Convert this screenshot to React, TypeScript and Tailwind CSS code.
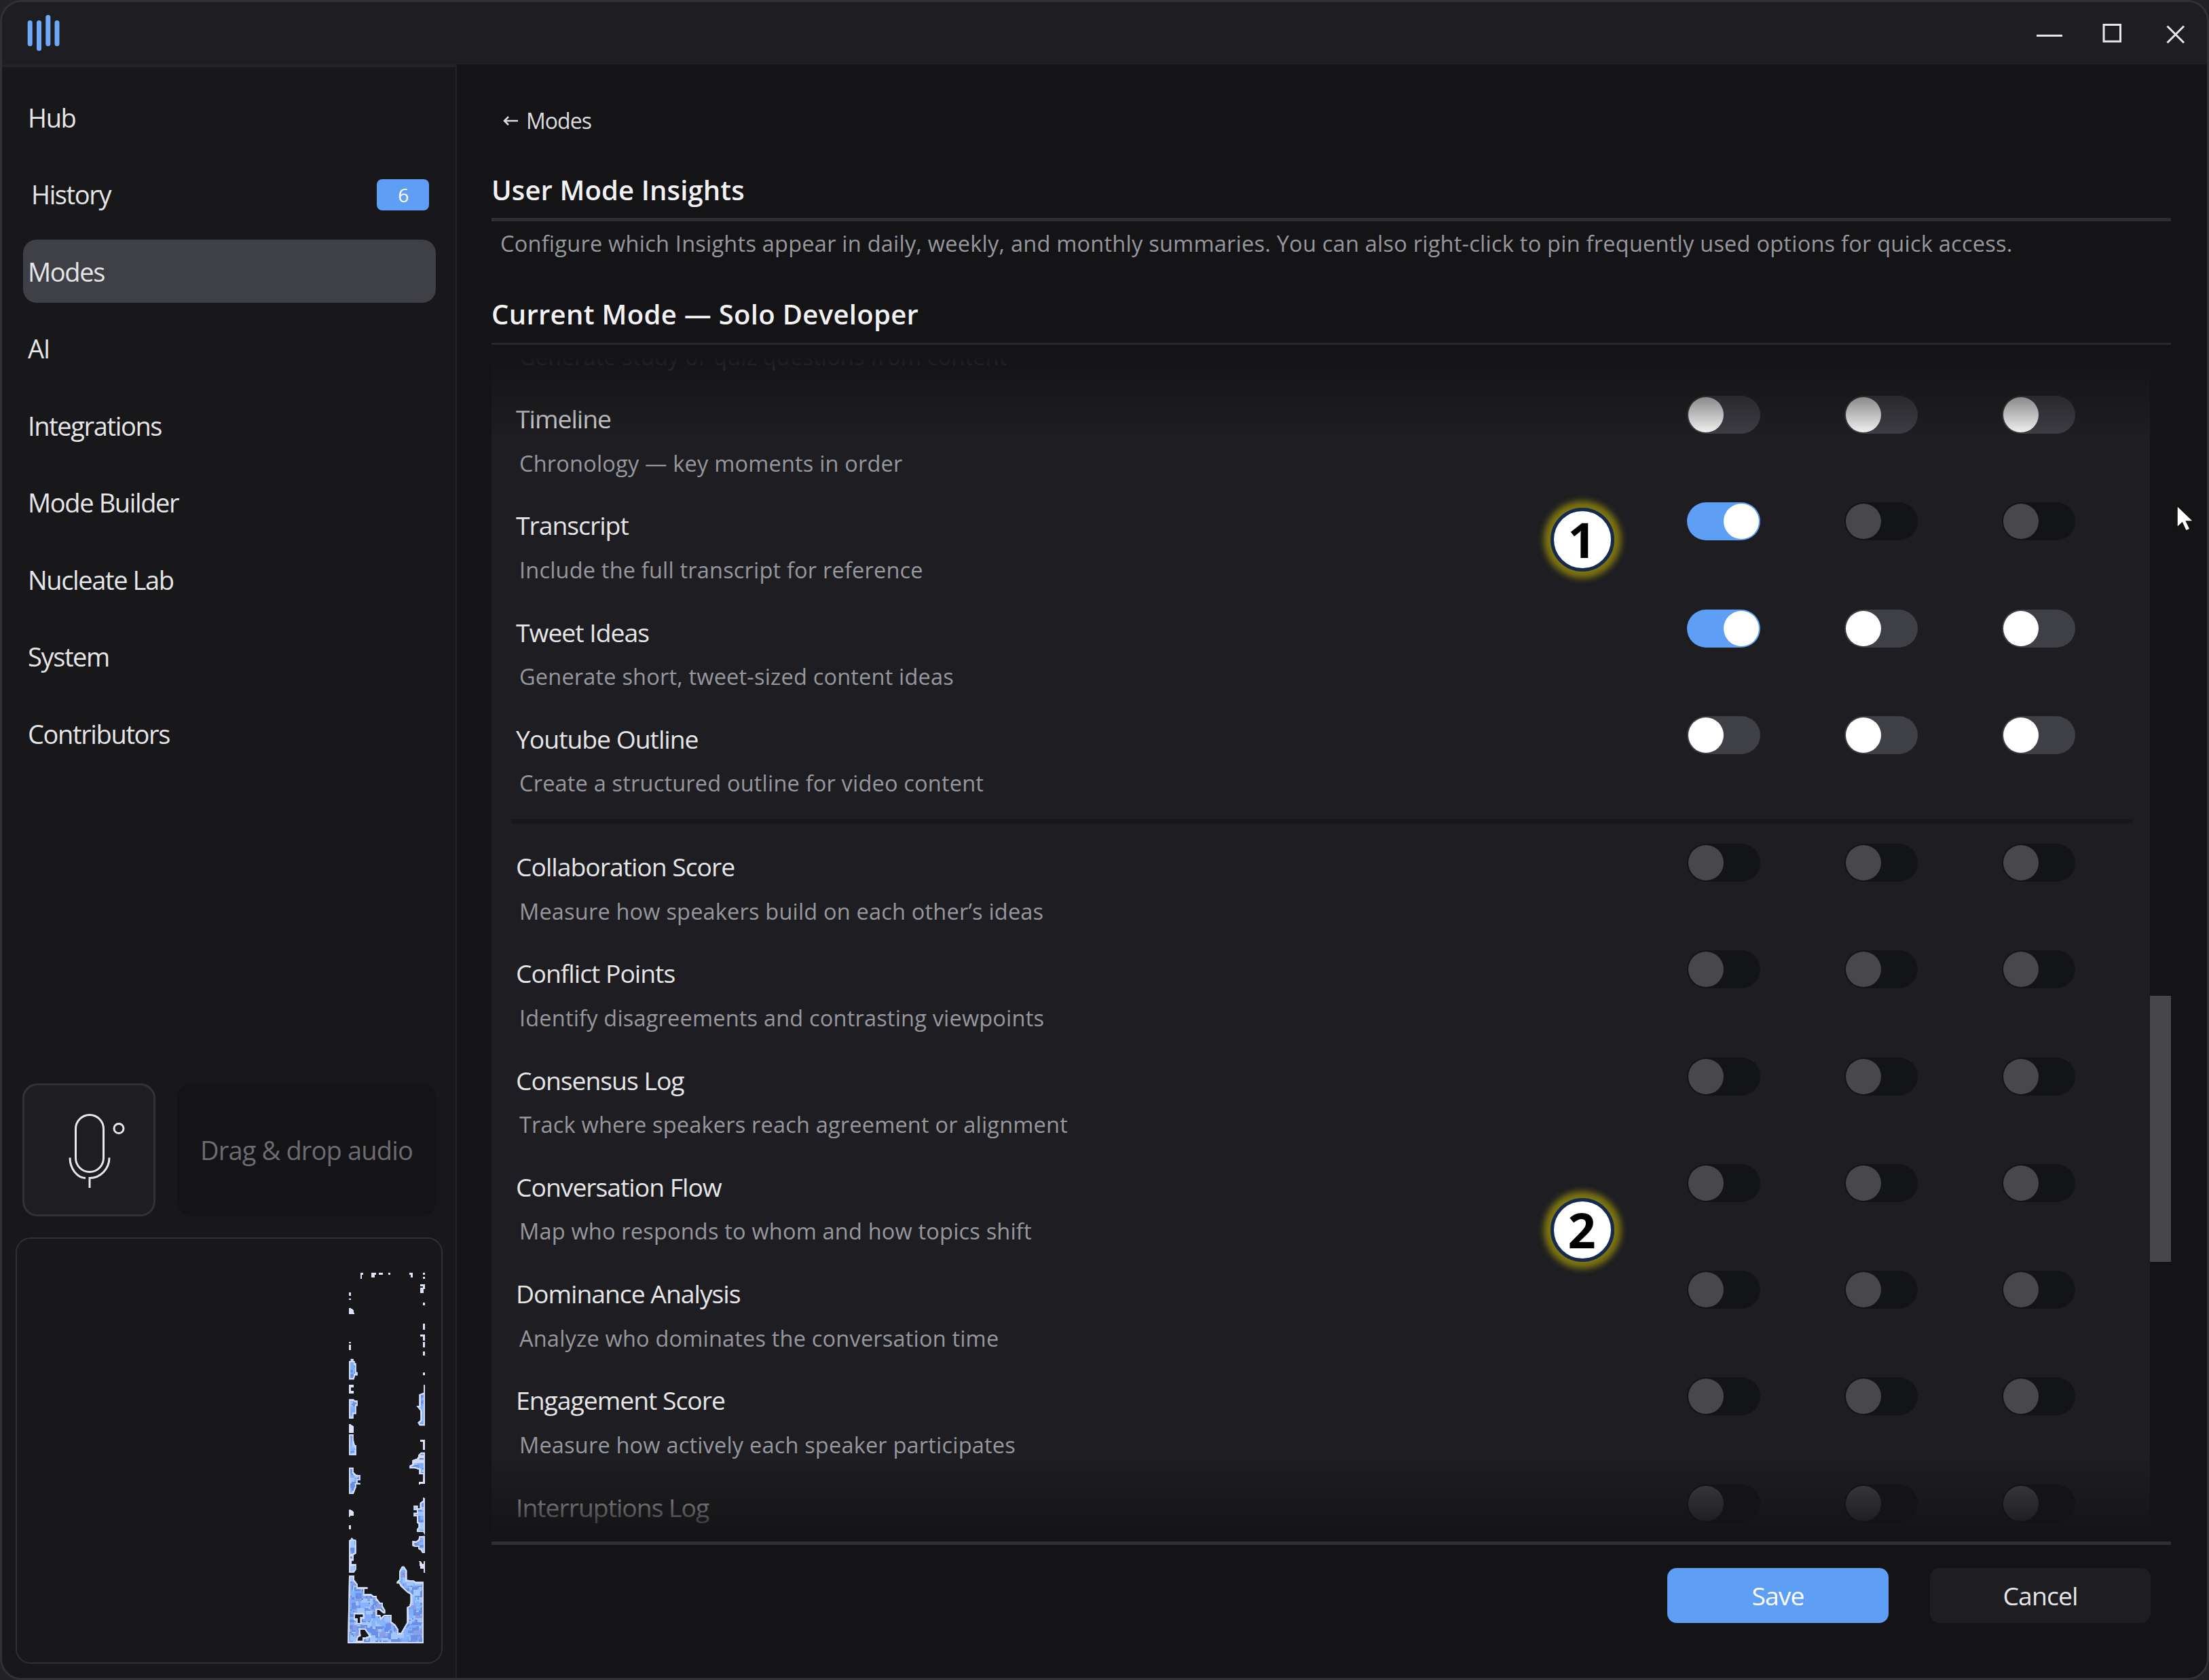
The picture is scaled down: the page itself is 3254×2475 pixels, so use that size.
import React from 'react'
import { clsx } from 'clsx'

type ToggleState = 'on' | 'off' | 'disabled'

type Insight = {
  title: string
  text: string
  toggles: [ToggleState, ToggleState, ToggleState]
}

const OFF: Insight['toggles'] = ['off', 'off', 'off']
const LOCKED: Insight['toggles'] = ['disabled', 'disabled', 'disabled']

const contentInsights: Insight[] = [
  { title: 'Timeline', text: 'Chronology — key moments in order', toggles: OFF },
  { title: 'Transcript', text: 'Include the full transcript for reference', toggles: ['on', 'disabled', 'disabled'] },
  { title: 'Tweet Ideas', text: 'Generate short, tweet-sized content ideas', toggles: ['on', 'off', 'off'] },
  { title: 'Youtube Outline', text: 'Create a structured outline for video content', toggles: OFF }
]

const speakerInsights: Insight[] = [
  { title: 'Collaboration Score', text: 'Measure how speakers build on each other’s ideas', toggles: LOCKED },
  { title: 'Conflict Points', text: 'Identify disagreements and contrasting viewpoints', toggles: LOCKED },
  { title: 'Consensus Log', text: 'Track where speakers reach agreement or alignment', toggles: LOCKED },
  { title: 'Conversation Flow', text: 'Map who responds to whom and how topics shift', toggles: LOCKED },
  { title: 'Dominance Analysis', text: 'Analyze who dominates the conversation time', toggles: LOCKED },
  { title: 'Engagement Score', text: 'Measure how actively each speaker participates', toggles: LOCKED },
  { title: 'Interruptions Log', text: '', toggles: LOCKED }
]

const navItems: { label: string; badge?: number }[] = [
  { label: 'Hub' },
  { label: 'History', badge: 6 },
  { label: 'Modes' },
  { label: 'AI' },
  { label: 'Integrations' },
  { label: 'Mode Builder' },
  { label: 'Nucleate Lab' },
  { label: 'System' },
  { label: 'Contributors' }
]

const TitleBar: React.FC = () => (
  <header className="flex h-[92px] shrink-0 items-start justify-between bg-[#1e1e22]">
    <svg className="mt-[18px] ml-[37px]" width="50" height="56" viewBox="0 0 50 56" fill="#6fa8fb">
      <rect x="0.7" y="9" width="7" height="38" rx="3.5" />
      <rect x="14" y="9" width="7" height="45" rx="3.5" />
      <rect x="27.3" y="1" width="7" height="46" rx="3.5" />
      <rect x="40.5" y="9" width="7" height="38" rx="3.5" />
    </svg>
    <svg className="mt-[30px] mr-[30px]" width="224" height="32" viewBox="0 0 224 32" fill="none" stroke="#e8e8ea" strokeWidth="3">
      <path d="M3 19.5H41" />
      <rect x="102" y="3.5" width="24.5" height="24.5" />
      <path d="M195.5 5.500L220 30M220 5.500L195.500 30" />
    </svg>
  </header>
)

const MicIcon: React.FC = () => (
  <svg width="196" height="196" viewBox="0 0 196 196" fill="none" stroke="#e8e8ea" strokeWidth="3">
    <rect x="78.500" y="46.500" width="41" height="84" rx="20.500" />
    <path d="M70 109.500C70 126 81 139.500 93 139.500M99 154V139.500C115 139.500 128 126 128 109.500" />
    <circle cx="142" cy="66.500" r="7" />
  </svg>
)

// Shapes are on a 3x grid, grouped in four vertical slices of the frame.
const sparks = [
  'M74 28h14v8h-6v18h-8zM123 28h20v8h-6v12h-14zM156 28h18v8h-18zM198 28h8v9h-8zM290 28h16v20h-8v-12h-8zM352 28h8v8h-8zM352 46h8v8h-8zM340 78h20v20h-6v20h-14v-24h12v-8h-12zM352 158h8v14h-8zM352 252h8v26h-8zM340 300h20v26h-8v-18h-12zM352 332h8v26h-8zM352 376h8v18h-8zM24 115h8v14h-8zM24 140h8v8h-8zM24 183h8l12 8v10l6 9h-26zM24 332h8v8h-8zM24 346h8v24h-8z',
  'M352 94h8v12h-8zM24 148h20v10h-10v16h10v13h-20zM24 322h8l12 8v30h-20zM340 390h20v44h-8v-36h-12z',
  'M24 234h8l12 8v18h-12l-4 6h-4zM24 302h8v20h-8zM334 124v-12h18v-12h8v20h-20z',
  'M334 28h8l6 12h6v-12h6v50h-6v-18h-14z'
]

const clumps = [
  { y: 375, d: 'M24 42h8v-10h12v10h6v10h6v40h6v14h-12v6l-4 12h-22zM24 211h20l6 6h12v24h-6v36h-12v20h-20zM24 366h20v24l6 24h6v44h-32zM360 148v180h-24l-8-14 12-10v-42l-18-22h12v-50l20-8v-34zM360 446v40h-48v-8l18-6v-14l12-12z' },
  { y: 840, d: 'M24 48h20v20l12 12 18 2v22h-12v12h12v7h-18v12l-12 30h-20zM360 0v104h-8v-26h-18v-20l-18-6h-24v-12l12-6v-18l20-6 6-10zM360 184v162l-8-14h-28v-12l8-8v-14l-8-6v-28h-14v-16h14v-12h-14v-20h18v12h10v-24l14-10v-14zM360 350v76h-12l-6-12-12-6v-10h-16l-10-4v-22l16 2 12-8 2-14zM24 370l8-4 4-8 8 8 12 2v60l-12 6v26h-20z' },
  { y: 1275, d: 'M24 0h20v20h-8v20h20v24l-10 14h-22zM24 90h24v20l14 18v14h44v8h-14v22h30l10 8h14v10l16 20h12v16l10 16v16h-8l-18-16h-10v22h14l4 12 14-12h32v30l18 14 12 20v16h12l18-32 8-14v-68l12-6 4-20v-30l-14-8-30-28-6-12h-10v-8l10-10v-36l12-22h10l12 18v42l30 2 8 6h36v272h-336zM50 262h36v12h-12v26h-12v-20h-12zM74 330h20l20 28-18 6h-12v14h-22l2-14 12-6z' }
]

// Small deterministic generator so the mottling is stable between renders.
const patches = (() => {
  let seed = 11
  const next = () => {
    seed = (seed * 16807) % 2147483647
    return seed / 2147483647
  }
  const colors = ['#6a8fe8', '#a3c6fb', '#86b3fd', '#8a9ee6', '#6c93ea', '#9cc4fa', '#7189b8', '#78a6f8']
  return Array.from({ length: 2600 }, (_, i) => {
    const small = i % 4 === 0
    const size = small ? 1 : 2 + Math.floor(next() * 4)
    return {
      x: 24 + Math.floor(next() * 55) * 6.2,
      y: 400 + Math.floor(next() * 206) * 6.2,
      w: size * 6.2,
      h: (small ? 1 : 2 + Math.floor(next() * 3)) * 6.2,
      fill: small ? colors[6] : colors[Math.floor(next() * 8) % 6]
    }
  })
})()

const Visualizer: React.FC = () => (
  <svg width="130" height="565" viewBox="0 0 390 1695" shapeRendering="crispEdges">
    <defs>
      <clipPath id="clumps">
        {clumps.map((c) => (
          <path key={c.y} d={c.d} transform={`translate(0 ${c.y})`} clipRule="evenodd" />
        ))}
      </clipPath>
    </defs>
    <g clipPath="url(#clumps)">
      <rect width="390" height="1695" fill="#80adfa" />
      {patches.map((p, i) => (
        <rect key={i} x={p.x} y={p.y} width={p.w} height={p.h} fill={p.fill} />
      ))}
      {clumps.map((c) => (
        <path key={c.y} d={c.d} transform={`translate(0 ${c.y})`} fill="none" stroke="#d5dcf6" strokeWidth="13" />
      ))}
    </g>
    {[0, 375, 840, 1275].map((y, i) => (
      <path key={y} d={sparks[i]} transform={`translate(0 ${y})`} fill="#dde2fa" />
    ))}
  </svg>
)

const Sidebar: React.FC = () => (
  <aside className="flex w-[670px] shrink-0 flex-col border-t-4 border-r-2 border-[#232326] bg-[#18181a]">
    <nav className="mt-[27px] flex flex-col gap-[20.5px] pr-[29px] pl-[31px]">
      {navItems.map((item) => (
        <div
          key={item.label}
          className={clsx(
            'flex h-[93px] items-center justify-between rounded-[20px] pt-px pr-[10px] text-[38px] tracking-[-0.036em] text-[#e6e6e8]',
            item.badge ? 'pl-[12px]' : 'pl-[7px]',
            item.label === 'Modes' && 'bg-[#3f3f46]'
          )}
        >
          {item.label}
          {item.badge && (
            <span className="flex h-[46px] w-[77px] items-center justify-center rounded-[8px] bg-[#5e9ef5] text-[28px] text-white">
              {item.badge}
            </span>
          )}
        </div>
      ))}
    </nav>
    <div className="mt-auto flex gap-[32px] pl-[30px]">
      <div className="size-[196px] rounded-[22px] bg-[#1e1e22] outline-[3px] -outline-offset-3 outline-[#323236]">
        <MicIcon />
      </div>
      <div className="flex h-[196px] w-[381px] items-center justify-center rounded-[22px] bg-[#141416] text-[38px] tracking-[-0.022em] text-[#6c6c72]">
        Drag &amp; drop audio
      </div>
    </div>
    <div className="mt-[31px] mb-[21px] ml-[20px] flex h-[628px] w-[629px] justify-end rounded-[22px] border-2 border-[#303034] pt-[41px] pr-[14px]">
      <Visualizer />
    </div>
  </aside>
)

const Toggle: React.FC<{ value: ToggleState }> = ({ value }) => (
  <div
    className={clsx(
      'flex h-[56px] w-[108px] items-center rounded-[28px] px-[2px]',
      value === 'on' && 'justify-end bg-[#5e9ef5]',
      value === 'off' && 'bg-[#3f3f46]',
      value === 'disabled' && 'bg-[#131417]'
    )}
  >
    <div className={clsx('size-[52px] rounded-full', value === 'disabled' ? 'bg-[#48474c]' : 'bg-white')} />
  </div>
)

const InsightRow: React.FC<{ insight: Insight }> = ({ insight }) => (
  <div className="flex h-[125.2px] items-start justify-between pr-[110px] pl-[36px]">
    <div className="flex flex-col gap-[17.5px] pt-[10px]">
      <div className="h-[48px] text-[37.300px] leading-[48px] tracking-[-0.027em] text-[#e6e6e8]">{insight.title}</div>
      <div className="h-[48px] pl-[5px] text-[32.500px] leading-[48px] tracking-[0.006em] text-[#97979e]">{insight.text}</div>
    </div>
    <div className="flex gap-[124px]">
      {insight.toggles.map((t, i) => (
        <Toggle key={i} value={t} />
      ))}
    </div>
  </div>
)

const InsightList: React.FC = () => (
  <div className="flex h-[1741px]">
    <div className="relative w-[2443px] overflow-hidden bg-[#1e1e22]">
      <div className="-mt-[25px] h-[48px] pl-[41px] text-[32.500px] leading-[48px] tracking-[0.006em] text-[#97979e]">
        Generate study or quiz questions from content
      </div>
      <div className="mt-[33px] flex flex-col gap-[32.1px]">
        {contentInsights.map((insight) => (
          <InsightRow key={insight.title} insight={insight} />
        ))}
      </div>
      <div className="mt-[27px] mr-[25px] mb-[30px] ml-[29px] h-[6px] bg-[#18181b]" />
      <div className="flex flex-col gap-[32.1px]">
        {speakerInsights.map((insight) => (
          <InsightRow key={insight.title} insight={insight} />
        ))}
      </div>
      {/* edge fades over the scrolled content */}
      <div className="absolute inset-x-0 top-0 h-[118px] bg-linear-to-b from-[#141416]/98 to-[#141416]/0" />
      <div className="absolute inset-x-0 bottom-0 h-[123px] bg-linear-to-t from-[#141416] to-[#141416]/0" />
    </div>
    <div className="w-[31px] pt-[940px]">
      <div className="h-[392px] bg-[#46464b]" />
    </div>
  </div>
)

const Marker: React.FC<{ label: string; className: string }> = ({ label, className }) => (
  <div
    className={clsx(
      'absolute flex size-[94px] items-center justify-center rounded-full border-[5px] border-[#16294f] bg-white pr-[2px] pb-[2px] text-[72px] leading-none font-bold text-black shadow-[0_0_10px_10px_#7d7410]',
      className
    )}
  >
    {label}
  </div>
)

export default function App() {
  return (
    <div className="h-[2475px] w-[3254px] overflow-hidden bg-[#222224] font-['Open_Sans','Noto_Sans',sans-serif]">
      <div className="relative flex h-full flex-col overflow-hidden rounded-[32px] border-[3px] border-[#323236] bg-[#141416]">
        <TitleBar />
        <div className="flex min-h-0 flex-1">
          <Sidebar />
          <main className="flex w-[2525px] flex-col pl-[51px]">
            <div className="mt-[63px] flex h-[40px] items-center pl-[17px] text-[32px] leading-[40px] tracking-[-0.03em] text-[#dcdcdf]">
              <svg className="mr-[11px]" width="23" height="18" viewBox="0 0 23 18" fill="none" stroke="#dcdcdf" strokeWidth="2.500">
                <path d="M22 9H2M8 3L2 9L8 15" />
              </svg>
              Modes
            </div>
            <h1 className="mt-[57px] h-[50px] text-[40px] leading-[50px] font-semibold tracking-[0.003em] text-[#f2f2f4]">
              User Mode Insights
            </h1>
            <div className="mt-[16px] h-[5px] bg-[#2f2f32]" />
            <p className="mt-[11px] h-[44px] pl-[13px] text-[32.500px] leading-[44px] tracking-[0.0075em] whitespace-nowrap text-[#97979e]">
              Configure which Insights appear in daily, weekly, and monthly summaries. You can also right-click to pin
              frequently used options for quick access.
            </p>
            <h2 className="mt-[57px] h-[50px] text-[40px] leading-[50px] font-semibold tracking-[0.008em] text-[#f2f2f4]">
              Current Mode — Solo Developer
            </h2>
            <div className="mt-[17px] mb-[19px] h-[3px] bg-[#29292c]" />
            <InsightList />
            <div className="mt-[3px] h-[5px] bg-[#2f2f32]" />
            <div className="mt-[34px] flex justify-end gap-[61px] pr-[30px] text-[37.300px] tracking-[-0.024em]">
              <button className="h-[81px] w-[326px] rounded-[14px] bg-[#5e9ef5] text-white">Save</button>
              <button className="h-[81px] w-[325px] rounded-[14px] bg-[#1e1e22] text-[#e6e6e8]">Cancel</button>
            </div>
          </main>
        </div>

        <Marker label="1" className="top-[745px] left-[2281px]" />
        <Marker label="2" className="top-[1762px] left-[2281px]" />
        <svg className="absolute top-[740px] left-[3202px]" width="28" height="42" viewBox="0 0 28 42">
          <path d="M2 2V34L9.500 27L15 39L21 36.500L15.500 25H26Z" fill="#fff" stroke="#111" strokeWidth="1.500" />
        </svg>
      </div>
    </div>
  )
}
